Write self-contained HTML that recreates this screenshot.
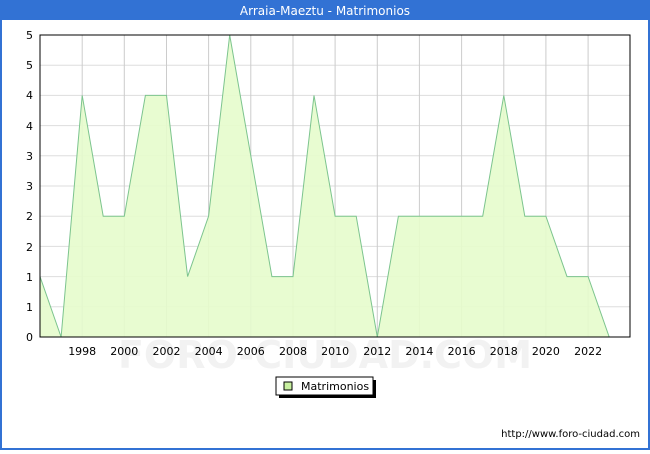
<!DOCTYPE html>
<html><head><style>
body{margin:0;width:650px;height:450px;overflow:hidden;background:#fff;font-family:"DejaVu Sans","Liberation Sans",sans-serif}
</style></head><body>
<svg width="650" height="450" xmlns="http://www.w3.org/2000/svg" font-family="DejaVu Sans, Liberation Sans, sans-serif">
<rect x="0" y="0" width="650" height="450" fill="#3272d4"/>
<rect x="2" y="20" width="646" height="428" fill="#fff"/>
<text x="325" y="15" fill="#fff" font-size="12" text-anchor="middle">Arraia-Maeztu - Matrimonios</text>
<g stroke="#dddddd" stroke-width="1">
<line x1="40" x2="630" y1="65.2" y2="65.2"/><line x1="40" x2="630" y1="95.4" y2="95.4"/><line x1="40" x2="630" y1="125.6" y2="125.6"/><line x1="40" x2="630" y1="155.8" y2="155.8"/><line x1="40" x2="630" y1="186" y2="186"/><line x1="40" x2="630" y1="216.2" y2="216.2"/><line x1="40" x2="630" y1="246.4" y2="246.4"/><line x1="40" x2="630" y1="276.6" y2="276.6"/><line x1="40" x2="630" y1="306.8" y2="306.8"/>
</g>
<g stroke="#cccccc" stroke-width="1">
<line x1="82.2" x2="82.2" y1="35" y2="337"/><line x1="124.3" x2="124.3" y1="35" y2="337"/><line x1="166.5" x2="166.5" y1="35" y2="337"/><line x1="208.6" x2="208.6" y1="35" y2="337"/><line x1="250.8" x2="250.8" y1="35" y2="337"/><line x1="293" x2="293" y1="35" y2="337"/><line x1="335.1" x2="335.1" y1="35" y2="337"/><line x1="377.3" x2="377.3" y1="35" y2="337"/><line x1="419.4" x2="419.4" y1="35" y2="337"/><line x1="461.6" x2="461.6" y1="35" y2="337"/><line x1="503.8" x2="503.8" y1="35" y2="337"/><line x1="545.9" x2="545.9" y1="35" y2="337"/><line x1="588.1" x2="588.1" y1="35" y2="337"/>
</g>
<text x="325" y="368" font-size="38" fill="#f2f2f2" text-anchor="middle" font-weight="bold">FORO-CIUDAD.COM</text>
<polygon fill="#e6fccc" fill-opacity="0.9" stroke="#7cc48e" stroke-width="1" points="40,337 40,276.6 61.1,337 82.2,95.4 103.2,216.2 124.3,216.2 145.4,95.4 166.5,95.4 187.6,276.6 208.6,216.2 229.7,35 250.8,155.8 271.9,276.6 293,276.6 314,95.4 335.1,216.2 356.2,216.2 377.3,337 398.4,216.2 419.4,216.2 440.5,216.2 461.6,216.2 482.7,216.2 503.8,95.4 524.8,216.2 545.9,216.2 567,276.6 588.1,276.6 609.2,337"/>
<rect x="40" y="35" width="590" height="302" fill="none" stroke="#000" stroke-width="1"/>
<g font-size="11" fill="#000" text-anchor="end">
<text x="33" y="341">0</text><text x="33" y="311">1</text><text x="33" y="281">1</text><text x="33" y="251">2</text><text x="33" y="220">2</text><text x="33" y="190">3</text><text x="33" y="160">3</text><text x="33" y="130">4</text><text x="33" y="99">4</text><text x="33" y="69">5</text><text x="33" y="39">5</text>
</g>
<g font-size="11" fill="#000" text-anchor="middle">
<text x="82.2" y="355">1998</text><text x="124.3" y="355">2000</text><text x="166.5" y="355">2002</text><text x="208.6" y="355">2004</text><text x="250.8" y="355">2006</text><text x="293" y="355">2008</text><text x="335.1" y="355">2010</text><text x="377.3" y="355">2012</text><text x="419.4" y="355">2014</text><text x="461.6" y="355">2016</text><text x="503.8" y="355">2018</text><text x="545.9" y="355">2020</text><text x="588.1" y="355">2022</text>
</g>
<rect x="279" y="380" width="97" height="18" fill="#000"/>
<rect x="276" y="377" width="97" height="18" fill="#fff" stroke="#000" stroke-width="1"/>
<rect x="284" y="382" width="8" height="8" fill="#c8f0a0" stroke="#000" stroke-width="1"/>
<text x="301" y="390" font-size="11" fill="#000">Matrimonios</text>
<text x="640" y="437" font-size="10" fill="#000" text-anchor="end">http://www.foro-ciudad.com</text>
</svg>
</body></html>
